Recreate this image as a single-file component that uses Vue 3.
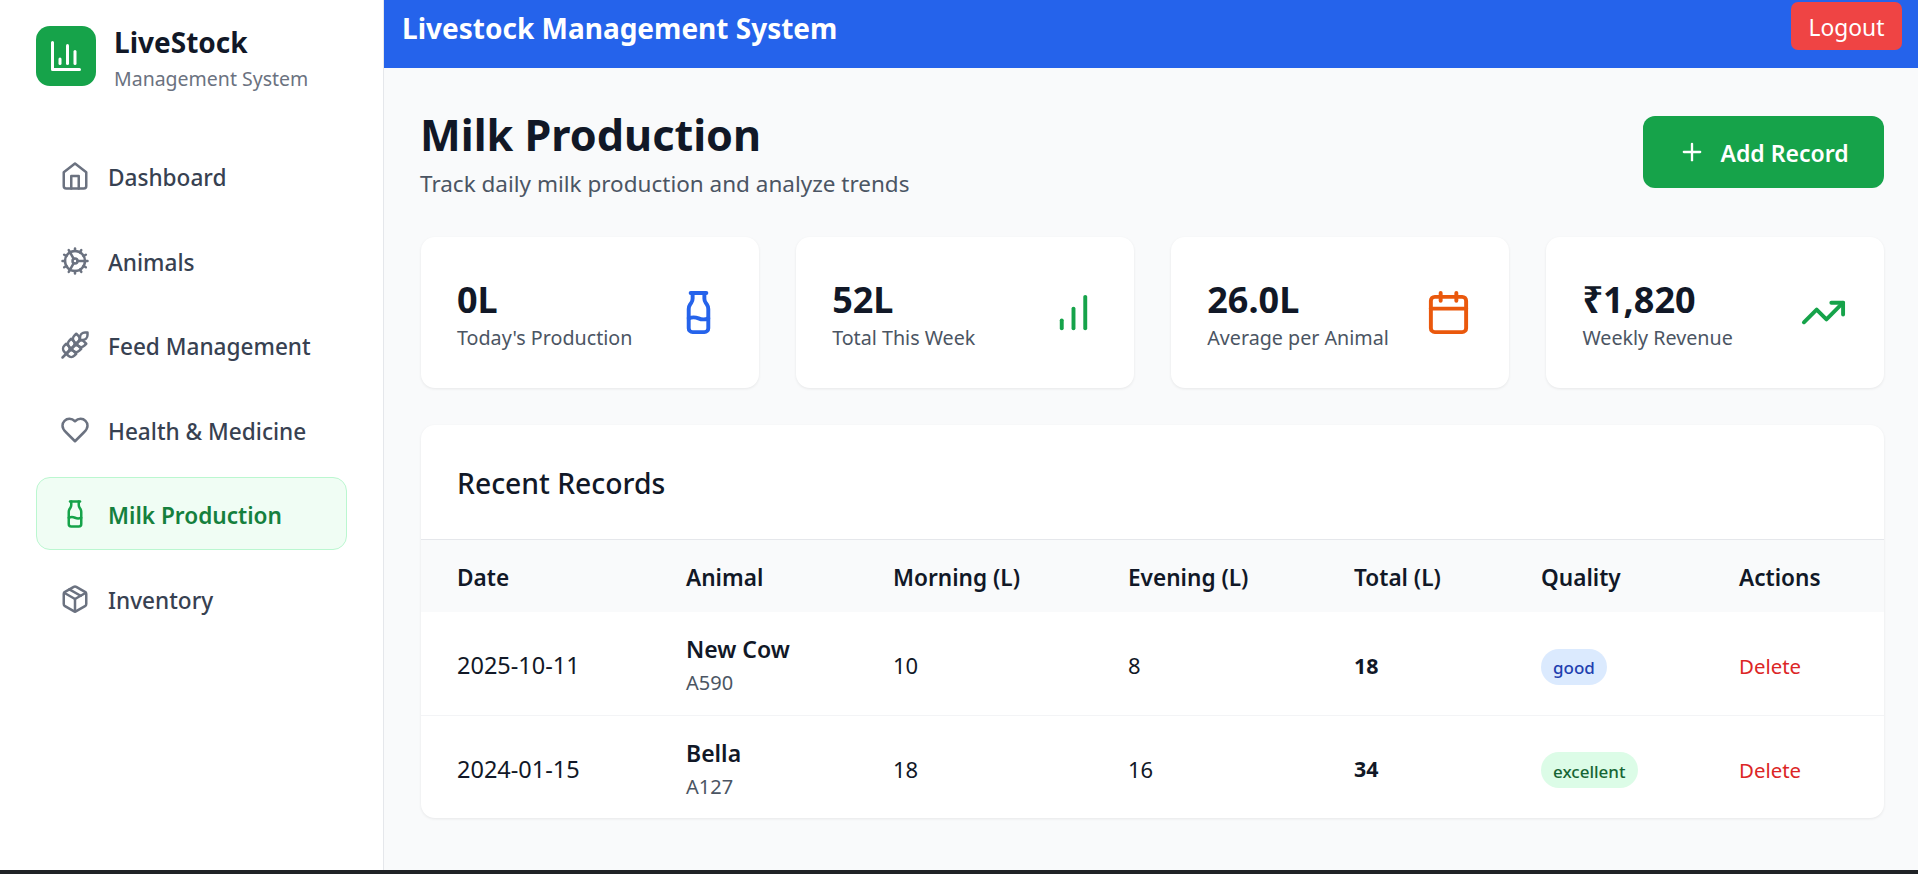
<script setup>
const icons = {
  home: ['M3 9l9-7 9 7v11a2 2 0 0 1-2 2H5a2 2 0 0 1-2-2z', 'M9 22V12h6v10'],
  cog: ['M12 20a8 8 0 1 0 0-16 8 8 0 0 0 0 16Z', 'M12 14a2 2 0 1 0 0-4 2 2 0 0 0 0 4Z', 'M12 2v2', 'M12 22v-2', 'm17 20.66-1-1.73', 'M11 10.27 7 3.34', 'm20.66 17-1.73-1', 'm3.34 7 1.73 1', 'M14 12h8', 'M2 12h2', 'm20.66 7-1.73 1', 'm3.34 17 1.73-1', 'm17 3.34-1 1.73', 'm11 13.73-4 6.93'],
  wheat: ['M2 22 16 8', 'M3.47 12.53 5 11l1.53 1.53a3.5 3.5 0 0 1 0 4.94L5 19l-1.53-1.53a3.5 3.5 0 0 1 0-4.94Z', 'M7.47 8.53 9 7l1.53 1.53a3.5 3.5 0 0 1 0 4.94L9 15l-1.53-1.53a3.5 3.5 0 0 1 0-4.94Z', 'M11.47 4.53 13 3l1.53 1.53a3.5 3.5 0 0 1 0 4.94L13 11l-1.53-1.53a3.5 3.5 0 0 1 0-4.94Z', 'M20 2h2v2a4 4 0 0 1-4 4h-2V6a4 4 0 0 1 4-4Z', 'M11.47 17.47 13 19l-1.53 1.53a3.5 3.5 0 0 1-4.94 0L5 19l1.53-1.53a3.5 3.5 0 0 1 4.94 0Z', 'M15.47 13.47 17 15l-1.53 1.53a3.5 3.5 0 0 1-4.94 0L9 15l1.53-1.53a3.5 3.5 0 0 1 4.94 0Z', 'M19.47 9.47 21 11l-1.53 1.53a3.5 3.5 0 0 1-4.94 0L13 11l1.53-1.53a3.5 3.5 0 0 1 4.94 0Z'],
  heart: ['M19 14c1.49-1.46 3-3.21 3-5.5A5.5 5.5 0 0 0 16.5 3c-1.76 0-3 .5-4.5 2-1.5-1.5-2.74-2-4.5-2A5.5 5.5 0 0 0 2 8.5c0 2.3 1.5 4.05 3 5.5l7 7Z'],
  milk: ['M8 2h8', 'M9 2v2.789a4 4 0 0 1-.672 2.219l-.656.984A4 4 0 0 0 7 10.212V20a2 2 0 0 0 2 2h6a2 2 0 0 0 2-2v-9.789a4 4 0 0 0-.672-2.219l-.656-.984A4 4 0 0 1 15 4.788V2', 'M7 15a6.472 6.472 0 0 1 5 0 6.47 6.47 0 0 0 5 0'],
  box: ['m7.5 4.27 9 5.15', 'M21 8a2 2 0 0 0-1-1.73l-7-4a2 2 0 0 0-2 0l-7 4A2 2 0 0 0 3 8v8a2 2 0 0 0 1 1.73l7 4a2 2 0 0 0 2 0l7-4A2 2 0 0 0 21 16Z', 'm3.3 7 8.7 5 8.7-5', 'M12 22V12'],
  chart3: ['M3 3v18h18', 'M18 17V9', 'M13 17V5', 'M8 17v-3'],
  bars: ['M12 20V10', 'M18 20V4', 'M6 20v-4'],
  calendar: ['M8 2v4', 'M16 2v4', 'M5 4h14a2 2 0 0 1 2 2v14a2 2 0 0 1-2 2H5a2 2 0 0 1-2-2V6a2 2 0 0 1 2-2Z', 'M3 10h18'],
  trend: ['M22 7 13.5 15.5 8.5 10.5 2 17', 'M16 7h6v6'],
  plus: ['M5 12h14', 'M12 5v14'],
}
const nav = [
  { label: 'Dashboard', icon: 'home' },
  { label: 'Animals', icon: 'cog' },
  { label: 'Feed Management', icon: 'wheat' },
  { label: 'Health & Medicine', icon: 'heart' },
  { label: 'Milk Production', icon: 'milk', active: true },
  { label: 'Inventory', icon: 'box' },
]
const stats = [
  { value: '0L', label: "Today's Production", icon: 'milk', color: '#2563eb' },
  { value: '52L', label: 'Total This Week', icon: 'bars', color: '#16a34a' },
  { value: '26.0L', label: 'Average per Animal', icon: 'calendar', color: '#ea580c' },
  { value: '₹1,820', label: 'Weekly Revenue', icon: 'trend', color: '#16a34a' },
]
const records = [
  { date: '2025-10-11', name: 'New Cow', tag: 'A590', am: 10, pm: 8, total: 18, quality: 'good' },
  { date: '2024-01-15', name: 'Bella', tag: 'A127', am: 18, pm: 16, total: 34, quality: 'excellent' },
]
const columns = ['Date', 'Animal', 'Morning (L)', 'Evening (L)', 'Total (L)', 'Quality', 'Actions']
</script>

<template>
  <div class="page">
    <div class="shell">
      <aside class="sidebar">
        <div class="brand">
          <div class="logo">
            <svg class="logo-icon" viewBox="0 0 24 24"><path v-for="d in icons.chart3" :key="d" :d="d" /></svg>
          </div>
          <div>
            <div class="brand-name">LiveStock</div>
            <div class="brand-sub">Management System</div>
          </div>
        </div>
        <nav class="nav">
          <div v-for="item in nav" :key="item.label" class="nav-item" :class="{ active: item.active }">
            <svg class="nav-icon" viewBox="0 0 24 24"><path v-for="d in icons[item.icon]" :key="d" :d="d" /></svg>
            <span>{{ item.label }}</span>
          </div>
        </nav>
      </aside>
      <div class="right">
        <header class="topbar">
          <div class="top-title">Livestock Management System</div>
          <button class="logout">Logout</button>
        </header>
        <main class="main">
          <div class="head">
            <div class="head-text">
              <h1>Milk Production</h1>
              <p>Track daily milk production and analyze trends</p>
            </div>
            <button class="add">
              <svg class="add-icon" viewBox="0 0 24 24"><path v-for="d in icons.plus" :key="d" :d="d" /></svg>
              <span>Add Record</span>
            </button>
          </div>
          <div class="stats">
            <div v-for="s in stats" :key="s.label" class="stat">
              <div>
                <div class="stat-value">{{ s.value }}</div>
                <div class="stat-label">{{ s.label }}</div>
              </div>
              <svg class="stat-icon" viewBox="0 0 24 24" :style="{ color: s.color }"><path v-for="d in icons[s.icon]" :key="d" :d="d" /></svg>
            </div>
          </div>
          <section class="records">
            <h2>Recent Records</h2>
            <table>
              <colgroup>
                <col class="c1" /><col class="c2" /><col class="c3" /><col class="c4" /><col class="c5" /><col class="c6" /><col class="c7" />
              </colgroup>
              <thead>
                <tr><th v-for="c in columns" :key="c">{{ c }}</th></tr>
              </thead>
              <tbody>
                <tr v-for="r in records" :key="r.date">
                  <td class="date">{{ r.date }}</td>
                  <td>
                    <div class="animal">{{ r.name }}</div>
                    <div class="tag">{{ r.tag }}</div>
                  </td>
                  <td>{{ r.am }}</td>
                  <td>{{ r.pm }}</td>
                  <td class="total">{{ r.total }}</td>
                  <td><span class="badge" :class="r.quality">{{ r.quality }}</span></td>
                  <td><span class="delete">Delete</span></td>
                </tr>
              </tbody>
            </table>
          </section>
        </main>
      </div>
    </div>
    <div class="edge"></div>
  </div>
</template>

<style>
html, body { margin: 0; }
</style>

<style scoped>
* { box-sizing: border-box; }
svg { fill: none; stroke: currentColor; stroke-width: 2; stroke-linecap: round; stroke-linejoin: round; flex: none; display: block; }
.page { width: 1918px; height: 874px; display: flex; flex-direction: column; overflow: hidden; font-family: "Noto Sans", "Open Sans", sans-serif; color: #111827; background: #f9fafb; }
.shell { flex: 1; display: flex; min-height: 0; }
.edge { height: 4px; background: #1f2226; }
.sidebar { width: 384px; flex: none; background: #fff; border-right: 1px solid #e5e7eb; padding: 26px 36px 0; }
.brand { display: flex; align-items: center; gap: 18px; height: 60px; }
.logo { width: 60px; height: 60px; border-radius: 14px; background: #16a34a; color: #fff; display: flex; align-items: center; justify-content: center; }
.logo-icon { width: 36px; height: 36px; }
.brand-name { font-size: 28px; font-weight: 700; line-height: 36px; color: #111827; margin-top: 5px; }
.brand-sub { font-size: 19.5px; line-height: 28px; color: #6b7280; margin-top: 5px; }
.nav { margin-top: 53px; display: flex; flex-direction: column; gap: 11.6px; }
.nav-item { height: 73px; display: flex; align-items: center; gap: 18px; padding: 4px 23px 0; border: 1px solid transparent; border-radius: 14px; font-size: 22.6px; font-weight: 500; color: #374151; }
.nav-item.active { background: #f0fdf4; border-color: #bbf7d0; color: #15803d; font-weight: 600; }
.nav-icon { width: 30px; height: 30px; color: #6b7280; margin-top: -3px; }
.active .nav-icon { color: #16a34a; }
.right { flex: 1; min-width: 0; display: flex; flex-direction: column; }
.topbar { height: 68px; flex: none; background: #2563eb; display: flex; justify-content: space-between; align-items: flex-start; padding: 2px 16px 0 18px; }
.top-title { font-size: 28px; font-weight: 700; line-height: 52px; color: #fff; }
.logout { width: 111px; height: 48px; border: 0; border-radius: 7px; background: #ef4444; color: #fff; font: 400 22.8px "Noto Sans", sans-serif; padding: 3px 0 0; }
.main { flex: 1; padding: 48px 34px 0 37px; }
.head { display: flex; justify-content: space-between; align-items: flex-start; height: 72px; }
.head-text { margin-left: -1px; }
h1 { margin: 0; font-size: 43.2px; font-weight: 700; line-height: 56px; margin-top: -9px; color: #111827; }
.head p { margin: 5px 0 0; font-size: 22.5px; line-height: 32px; color: #4b5563; }
.add { width: 241px; height: 72px; border: 0; border-radius: 12px; background: #16a34a; color: #fff; display: flex; align-items: center; justify-content: center; gap: 14px; font: 600 23px "Noto Sans", sans-serif; padding: 2px 0 0; }
.add-icon { width: 28px; height: 28px; margin-top: -2px; }
.stats { margin-top: 49px; display: grid; grid-template-columns: repeat(4, 1fr); gap: 37.5px; }
.stat { height: 151px; background: #fff; border-radius: 14px; box-shadow: 0 1px 3px rgba(0,0,0,.08); padding: 0 37px 0 36px; display: flex; align-items: center; justify-content: space-between; }
.stat-value { font-size: 36px; font-weight: 700; line-height: 44px; color: #111827; margin-top: 4px; }
.stat-label { font-size: 19.7px; line-height: 28px; color: #4b5563; margin-top: 2px; }
.stat-icon { width: 47px; height: 47px; }
.records { margin-top: 37px; background: #fff; border-radius: 14px; box-shadow: 0 1px 3px rgba(0,0,0,.08); overflow: hidden; }
h2 { margin: 0; height: 115px; padding: 2px 0 0 36px; display: flex; align-items: center; font-size: 28.3px; font-weight: 500; color: #111827; border-bottom: 1px solid #e5e7eb; }
table { width: 100%; border-collapse: collapse; table-layout: fixed; }
.c1 { width: 228px; } .c2 { width: 207px; } .c3 { width: 235px; } .c4 { width: 226px; } .c5 { width: 187px; } .c6 { width: 198px; }
th { height: 72px; background: #f9fafb; text-align: left; padding: 2px 0 0 36px; font-size: 22.6px; font-weight: 600; color: #111827; }
th:nth-child(n+2), td:nth-child(n+2) { padding-left: 37px; }
td { height: 103px; padding: 4px 0 0 36px; font-size: 22px; color: #111827; }
.date { font-size: 23.5px; }
tbody tr + tr td { border-top: 1px solid #f3f4f6; }
.animal { font-size: 23px; font-weight: 600; line-height: 32px; margin-top: -1px; }
.tag { font-size: 20px; line-height: 26px; color: #4b5563; margin-top: 5px; }
.total { font-weight: 700; font-size: 21.4px; }
.badge { display: inline-flex; align-items: center; height: 36px; padding: 2px 12px 0; border-radius: 18px; font-size: 17px; font-weight: 500; margin-top: 3px; }
.badge.good { background: #dbeafe; color: #1e40af; }
.badge.excellent { background: #dcfce7; color: #166534; }
.delete { font-size: 20.4px; color: #dc2626; }
</style>
